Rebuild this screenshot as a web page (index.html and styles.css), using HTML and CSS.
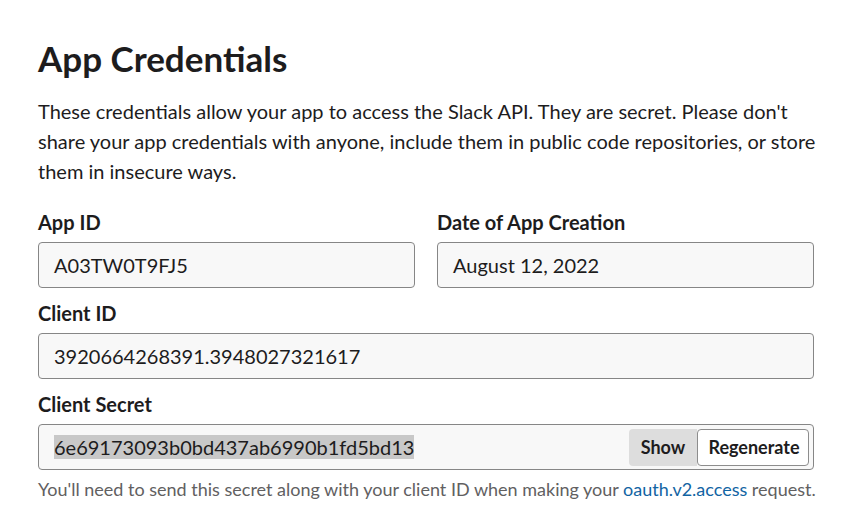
FILE: index.html
```html
<!DOCTYPE html>
<html>
<head>
<meta charset="utf-8">
<link rel="stylesheet" href="styles.css">
</head>
<body>
<div class="page">
  <h1 class="title">App Credentials</h1>
  <p class="intro">These credentials allow your app to access the Slack API. They are secret. Please don't share your app credentials with anyone, include them in public code repositories, or store them in insecure ways.</p>
  <div class="row">
    <div class="field">
      <div class="label">App ID</div>
      <div class="input">A03TW0T9FJ5</div>
    </div>
    <div class="field">
      <div class="label">Date of App Creation</div>
      <div class="input">August 12, 2022</div>
    </div>
  </div>
  <div class="field">
    <div class="label">Client ID</div>
    <div class="input">3920664268391.3948027321617</div>
  </div>
  <div class="field">
    <div class="label">Client Secret</div>
    <div class="input secret">
      <span class="selected">6e69173093b0bd437ab6990b1fd5bd13</span>
      <div class="actions">
        <span class="btn show">Show</span>
        <span class="btn regen">Regenerate</span>
      </div>
    </div>
  </div>
  <p class="help">You'll need to send this secret along with your client ID when making your <a class="link">oauth.v2.access</a> request.</p>
</div>
</body>
</html>
```
FILE: styles.css
```css
* { box-sizing: border-box; }
html, body { margin: 0; padding: 0; background: #fff; }
body { font-family: Lato, "Noto Sans", sans-serif; color: #1d1c1d; }
.page { width: 853px; padding: 36px 39px 0 38px; }
.title { margin: 0; font-size: 35px; font-weight: 700; line-height: 44px; }
.intro { margin: 16px -8px 0 0; font-size: 20px; line-height: 30px; }
.row { display: flex; gap: 22px; margin-top: 11px; }
.row .field { flex: 1; }
.label { font-size: 20px; font-weight: 700; line-height: 24px; margin: 13px 0 8px; }
.row .label { margin-top: 13px; }
.input { height: 46px; border: 1px solid #868686; border-radius: 4px; background: #f8f8f8; font-size: 20px; line-height: 44px; padding: 0 15px; display: flex; align-items: center; }
.secret { padding-right: 4px; }
.selected { background: #c8c8c8; line-height: 24px; }
.actions { margin-left: auto; display: flex; height: 37px; }
.btn { font-size: 18px; font-weight: 700; line-height: 37px; border-radius: 4px; text-align: center; }
.show { background: #dddddd; border-radius: 4px 0 0 4px; width: 68px; }
.regen { background: #fff; border: 1px solid #8d8d8d; line-height: 35px; width: 112px; padding-left: 2px; }
.help { margin: 8px -8px 0 0; font-size: 18px; line-height: 22px; color: #616061; white-space: nowrap; }
.link { color: #1264a3; text-decoration: none; }
```
